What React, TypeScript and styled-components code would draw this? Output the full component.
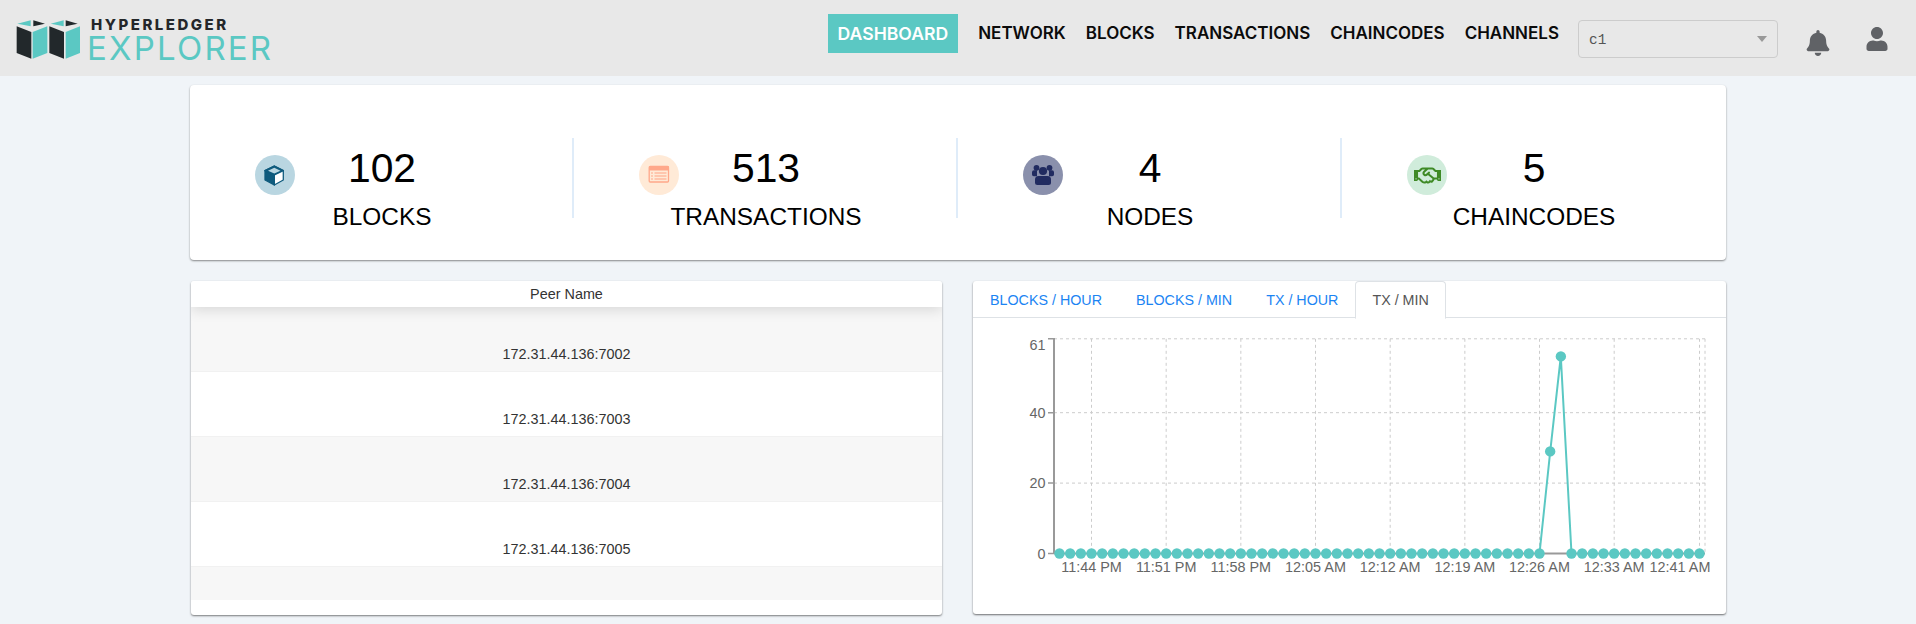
import React from 'react';
import styled, { createGlobalStyle } from 'styled-components';
import { FaBell, FaUser, FaRegHandshake } from 'react-icons/fa';

const TEAL = '#5bc8c3';

const Global = createGlobalStyle`
  html, body { margin: 0; padding: 0; background: #f0f4f8; height: 624px; overflow: hidden; }
  body { font-family: "Liberation Sans", Arial, sans-serif; color: #000; }
`;

const Header = styled.header`
  display: flex; align-items: flex-start; height: 76px; padding-right: 27.5px; background: #e8e8e8; box-sizing: border-box;
`;
const Logo = styled.div`
  display: flex; align-items: flex-start; padding: 17px 0 0 15px;
`;
const LogoMark = styled.svg`
  width: 67px; height: 45px; display: block;
`;
const LogoText = styled.div`
  margin-left: 9px; display: flex; flex-direction: column;
`;
const LogoTop = styled.span`
  font-family: Inter, sans-serif; font-weight: 800; font-size: 15px; line-height: 15px; letter-spacing: 2.5px; color: #24272a;
`;
const LogoBottom = styled.span`
  font-family: Inter, sans-serif; font-weight: 400; font-size: 33px; line-height: 33px; letter-spacing: 2.2px; color: ${TEAL}; margin-left: -4px;
`;
const Nav = styled.nav`
  display: flex; align-items: flex-start; margin-left: auto; padding-top: 14px;
`;
const NavLink = styled.a<{ $active?: boolean }>`
  font-family: Inter, sans-serif; font-weight: 600; font-size: ${p => (p.$active ? '17.6px' : '17px')}; line-height: 39px; padding: 0 10px; height: 39px;
  color: ${p => (p.$active ? '#fff' : '#0b0b0b')};
  background: ${p => (p.$active ? TEAL : 'transparent')};
  margin-right: ${p => (p.$active ? '10px' : '0')};
`;
const Select = styled.div`
  box-sizing: border-box; width: 200px; height: 38px; margin: 20px 0 0 9px; border: 1px solid #ccc; border-radius: 4px;
  display: flex; align-items: center; justify-content: space-between; padding: 2px 10px 0 10px;
  font-family: "Liberation Mono", monospace; font-size: 14.4px; color: #555;
`;
const Caret = styled.span`
  width: 0; height: 0; border-left: 5px solid transparent; border-right: 5px solid transparent; border-top: 6px solid #999; margin-top: -2px;
`;
const IconSlot = styled.div<{ $w: number; $mt: number; $ml: number }>`
  color: #606266; font-size: ${p => p.$w}px; line-height: 0; margin-left: ${p => p.$ml}px; margin-top: ${p => p.$mt}px;
`;
const Page = styled.main`
  width: 1536px; margin: 9px 0 0 190px;
`;
const StatsCard = styled.section`
  display: grid; grid-template-columns: repeat(4, 384px); height: 175px; box-sizing: border-box; padding-top: 53px;
  background: #fff; border-radius: 4px; box-shadow: 0 1px 2px rgba(0,0,0,.45);
`;
const Stat = styled.div<{ $last?: boolean }>`
  display: flex; align-items: flex-start; height: 80px; box-sizing: border-box;
  border-right: ${p => (p.$last ? '0' : '2px solid #dfecf9')};
`;
const StatIcon = styled.div<{ $bg: string; $fg: string }>`
  flex: 0 0 40px; height: 40px; border-radius: 50%; margin: 17px -13px 0 65px;
  background: ${p => p.$bg}; color: ${p => p.$fg};
  display: flex; align-items: center; justify-content: center; font-size: 27px;
`;
const IconArt = styled.svg`
  width: 40px; height: 40px; display: block;
`;
const StatText = styled.div`
  flex: 0 0 200px; text-align: center; margin-top: 6px;
`;
const StatNumber = styled.div`
  font-size: 40.8px; line-height: 48px;
`;
const StatLabel = styled.div`
  font-size: 24.4px; line-height: 30px; margin-top: 10px;
`;
const Columns = styled.div`
  display: grid; grid-template-columns: 752px 753px; column-gap: 31px; margin-top: 21px;
`;
const TablePanel = styled.section`
  height: 334px; margin-left: 1px; width: 751px; background: #fff; border-radius: 3px; box-shadow: 0 1px 2px rgba(0,0,0,.5);
  overflow: hidden; color: #333; font-size: 14.4px;
`;
const TableHead = styled.div`
  position: relative; height: 26px; line-height: 26px; text-align: center; background: #fff; box-shadow: 0 3px 14px rgba(0,0,0,.13);
`;
const Row = styled.div<{ $odd: boolean }>`
  box-sizing: border-box; height: 65px; padding-top: 39px; line-height: 17px; text-align: center;
  background: ${p => (p.$odd ? '#f7f7f7' : '#fff')}; border-bottom: 1px solid #f1f1f1;
`;
const EmptyRow = styled.div`
  height: 33px; background: #f7f7f7;
`;
const ChartPanel = styled.section`
  height: 333px; background: #fff; border-radius: 3px; box-shadow: 0 1px 2px rgba(0,0,0,.55); overflow: hidden;
`;
const Tabs = styled.div`
  display: flex; height: 37px; box-sizing: border-box; border-bottom: 1.5px solid #dee2e6;
`;
const Tab = styled.a<{ $active?: boolean }>`
  box-sizing: border-box; height: 38px; padding: 0 16px; line-height: 36px; font-size: 14.3px;
  color: ${p => (p.$active ? '#555' : '#1b84f3')};
  background: ${p => (p.$active ? '#fff' : 'transparent')};
  border: 1px solid ${p => (p.$active ? '#dee2e6' : 'transparent')};
  border-bottom-color: ${p => (p.$active ? '#fff' : 'transparent')};
  border-radius: 4px 4px 0 0;
`;
const ChartSvg = styled.svg`
  display: block; width: 753px; height: 296px;
`;

const CubeIcon = () => (
  <IconArt viewBox="0 0 40 40">
    <polygon points="19.3,11 28.3,15.7 28.3,25 19.3,30 19.3,20 10,15.7" fill="#fff" stroke="#0f5b7d" strokeWidth="1.3" strokeLinejoin="round" />
    <polygon points="10,15.7 19.3,20 19.3,30 10,25" fill="#0f5b7d" stroke="#0f5b7d" strokeWidth="1.3" strokeLinejoin="round" />
    <polygon points="10,15.7 19.3,11 28.3,15.7 19.3,20" fill="#0f5b7d" stroke="#0f5b7d" strokeWidth="1.3" strokeLinejoin="round" />
    <polygon points="13,15.7 19.3,12.8 25.5,15.7 19.3,18.4" fill="#b9d6e1" />
  </IconArt>
);
const ListIcon = () => (
  <IconArt viewBox="0 0 40 40">
    <rect x="10.2" y="11.5" width="19.3" height="15.5" rx="1" fill="none" stroke="#ffa88a" strokeWidth="1.3" />
    <rect x="10" y="11" width="20" height="4.5" rx="1" fill="#ffa88a" />
    <g stroke="#ffa88a" strokeWidth="1.1">
      <line x1="12" x2="14" y1="18" y2="18" /><line x1="15.5" x2="27.5" y1="18" y2="18" />
      <line x1="12" x2="14" y1="21" y2="21" /><line x1="15.5" x2="27.5" y1="21" y2="21" />
      <line x1="12" x2="14" y1="24" y2="24" /><line x1="15.5" x2="27.5" y1="24" y2="24" />
    </g>
  </IconArt>
);
const NodesIcon = () => (
  <IconArt viewBox="0 0 40 40" fill="#212b60">
    <circle cx="13.5" cy="12.8" r="2.9" /><circle cx="26.5" cy="12.8" r="2.9" />
    <path d="M9 17.2q0-2 2-2h3v6h-3.2q-1.8 0-1.8-1.8zM31 17.2q0-2-2-2h-3v6h3.2q1.8 0 1.8-1.8z" />
    <circle cx="20" cy="16" r="4.1" />
    <path d="M12 24.5q0-3.5 3.5-3.5h9q3.5 0 3.5 3.5v3q0 2.5-2.5 2.5h-11q-2.5 0-2.5-2.5z" />
  </IconArt>
);

const stats = [
  { n: '102', l: 'BLOCKS', bg: '#b9d6e1', fg: '#0f5b7d', icon: <CubeIcon /> },
  { n: '513', l: 'TRANSACTIONS', bg: '#ffead7', fg: '#ffa88a', icon: <ListIcon /> },
  { n: '4', l: 'NODES', bg: '#8a90ac', fg: '#212b60', icon: <NodesIcon /> },
  { n: '5', l: 'CHAINCODES', bg: '#d0ecdb', fg: '#3f8a26', icon: <FaRegHandshake /> },
];
const navItems = ['NETWORK', 'BLOCKS', 'TRANSACTIONS', 'CHAINCODES', 'CHANNELS'];

const X0 = 1059.5, STEP = 10.667, Y0 = 553.5, UNIT = 3.52;
const vals = Array.from({ length: 61 }, (_, i) => (i === 46 ? 29 : i === 47 ? 56 : 0));
const px = (i: number) => X0 + i * STEP;
const py = (v: number) => Y0 - v * UNIT;
const gridX = [3, 10, 17, 24, 31, 38, 45, 52, 60].map(px);
const gridY = [338.8, 412.7, 483.1];
const xLabels: [string, number][] = [
  ['11:44 PM', px(3)], ['11:51 PM', px(10)], ['11:58 PM', px(17)], ['12:05 AM', px(24)], ['12:12 AM', px(31)],
  ['12:19 AM', px(38)], ['12:26 AM', px(45)], ['12:33 AM', px(52)], ['12:41 AM', 1680],
];
const yLabels: [string, number][] = [['61', 350], ['40', 418], ['20', 488], ['0', 559]];

function Chart() {
  return (
    <ChartSvg viewBox="973 318 753 296">
      <g stroke="#ccc" strokeDasharray="3 3" strokeWidth="1" fill="none">
        {gridY.map(y => <line key={y} x1="1054" x2="1705" y1={y} y2={y} />)}
        {gridX.map(x => <line key={x} x1={x} x2={x} y1="338.8" y2={Y0} />)}
        <line x1="1705" x2="1705" y1="338.8" y2={Y0} />
      </g>
      <g stroke="#999" strokeWidth="1.5" fill="none">
        <line x1="1054" x2="1054" y1="338" y2={Y0} strokeWidth="2" />
        <line x1="1054" x2="1705" y1={Y0} y2={Y0} strokeWidth="2" />
        {gridY.concat(Y0).map(y => <line key={y} x1="1048" x2="1054" y1={y} y2={y} />)}
      </g>
      <g fill="#666" fontSize="14.4" fontFamily='"Liberation Sans", Arial, sans-serif'>
        {yLabels.map(([t, b]) => <text key={t} x="1045.5" y={b} textAnchor="end">{t}</text>)}
        {xLabels.map(([t, x]) => <text key={t} x={x} y="571.5" textAnchor="middle">{t}</text>)}
      </g>
      <polyline
        points="1539.5,553.5 1550.2,451.7 1560.8,356.4 1571.5,553.5"
        fill="none" stroke={TEAL} strokeWidth="2"
      />
      <g fill={TEAL}>
        {vals.map((v, i) => <circle key={i} cx={px(i)} cy={py(v)} r="5.2" />)}
      </g>
    </ChartSvg>
  );
}

export default function App() {
  return (
    <>
      <Global />
      <Header>
        <Logo>
          <LogoMark viewBox="45 50 201 135">
            <g fill="#22282b">
              <polygon points="50,78 94,95 94,175 50,158" />
              <polygon points="148,78 192,95 192,175 148,158" />
              <polygon points="100,60 135,70 100,78" />
              <polygon points="197,60 233,70 197,78" />
            </g>
            <g fill={TEAL}>
              <polygon points="98,95 142,78 142,158 98,175" />
              <polygon points="197,95 240,78 240,158 197,175" />
              <polygon points="52,70 92,60 92,78" />
              <polygon points="152,70 191,60 191,78" />
            </g>
          </LogoMark>
          <LogoText>
            <LogoTop>HYPERLEDGER</LogoTop>
            <LogoBottom>EXPLORER</LogoBottom>
          </LogoText>
        </Logo>
        <Nav>
          <NavLink $active>DASHBOARD</NavLink>
          {navItems.map(n => <NavLink key={n}>{n}</NavLink>)}
        </Nav>
        <Select>c1<Caret /></Select>
        <IconSlot $w={26} $mt={30} $ml={27}><FaBell /></IconSlot>
        <IconSlot $w={24} $mt={27} $ml={33.5}><FaUser /></IconSlot>
      </Header>
      <Page>
        <StatsCard>
          {stats.map((s, i) => (
            <Stat key={s.l} $last={i === 3}>
              <StatIcon $bg={s.bg} $fg={s.fg}>{s.icon}</StatIcon>
              <StatText>
                <StatNumber>{s.n}</StatNumber>
                <StatLabel>{s.l}</StatLabel>
              </StatText>
            </Stat>
          ))}
        </StatsCard>
        <Columns>
          <TablePanel>
            <TableHead>Peer Name</TableHead>
            <Row $odd>172.31.44.136:7002</Row>
            <Row $odd={false}>172.31.44.136:7003</Row>
            <Row $odd>172.31.44.136:7004</Row>
            <Row $odd={false}>172.31.44.136:7005</Row>
            <EmptyRow />
          </TablePanel>
          <ChartPanel>
            <Tabs>
              <Tab>BLOCKS / HOUR</Tab>
              <Tab>BLOCKS / MIN</Tab>
              <Tab>TX / HOUR</Tab>
              <Tab $active>TX / MIN</Tab>
            </Tabs>
            <Chart />
          </ChartPanel>
        </Columns>
      </Page>
    </>
  );
}
